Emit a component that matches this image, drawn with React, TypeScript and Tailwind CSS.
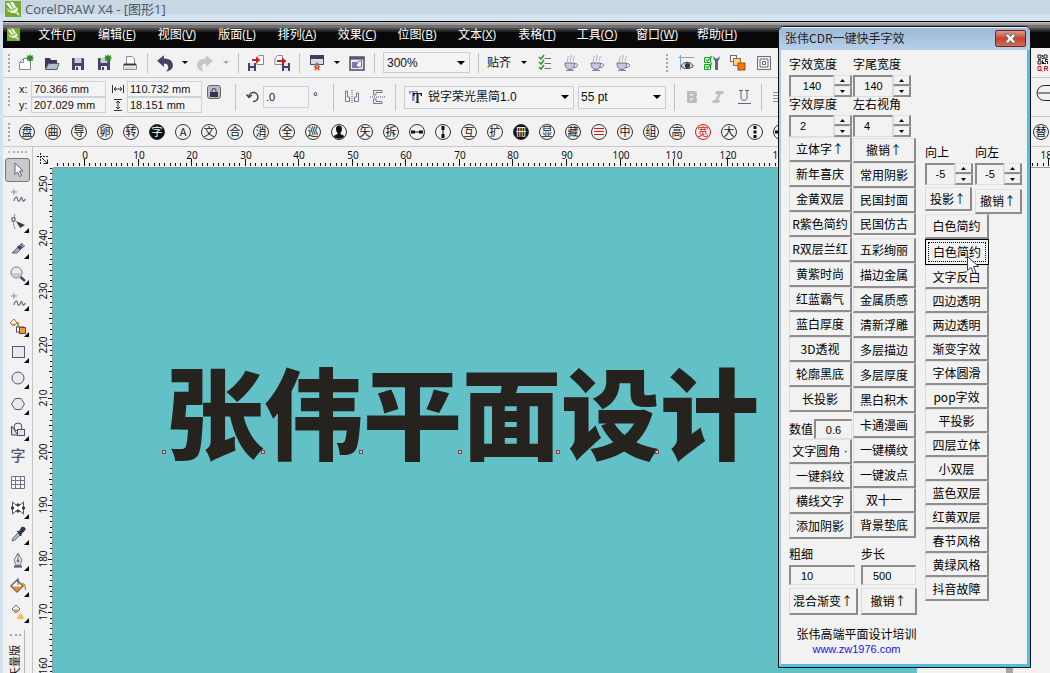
import React from "react";

const UI = "font-['Liberation_Sans','Noto_Sans_CJK_SC',sans-serif]";
const CJK = "font-['Noto_Sans_CJK_SC',sans-serif]";

type Kids = { children?: React.ReactNode };

function Svg({ children, s = 16 }: Kids & { s?: number }) {
  return (
    <svg width={s} height={s} viewBox="0 0 16 16" fill="none" stroke="#4a4d63" strokeWidth="1" aria-hidden="true" className="shrink-0 overflow-visible">
      {children}
    </svg>
  );
}

/* ---------- standard toolbar drawings ---------- */
const page = <path d="M5.5 3.5 H12.5 V14.5 H1.5 V7.5 Z M5.5 3.5 V7.5 H1.5" fill="#fff" stroke="#8487a0" />;
const floppy = (
  <>
    <path d="M2 3 H13 L14 4 V15 H2 Z" fill="#414564" stroke="none" />
    <path d="M4.5 3 H11.5 V8 H4.5 Z" fill="#c9cbdc" stroke="none" />
    <path d="M5 11 H11 V15 H5 Z" fill="#e8e8f0" stroke="none" />
    <path d="M6 12 H8 V15 H6 Z" fill="#414564" stroke="none" />
  </>
);
const spark = <path d="M12 -1 L13 1 L15 0 L14.5 2 L16 3 L14.5 4 L15 6 L13 5.5 L12 7 L11 5.5 L9 6 L9.5 4 L8 3 L9.5 2 L9 0 L11 1 Z" fill="#2f8d27" stroke="none" />;
const NewIcon = () => <Svg>{page}{spark}</Svg>;
const OpenIcon = () => (
  <Svg>
    <path d="M1 14 V3 H6 L7 5 H13 V8 H5 Z" fill="#363a55" stroke="none" />
    <path d="M1.5 14.5 L4.5 8.5 H15 L13 14.5 Z" fill="#b9bdd0" stroke="#555a76" />
  </Svg>
);
const SaveIcon = () => <Svg>{floppy}</Svg>;
const SaveAsIcon = () => <Svg>{floppy}{spark}</Svg>;
const PrintIcon = () => (
  <Svg>
    <path d="M4.5 9 V1.5 H10 L12.5 4 V9" fill="#fff" stroke="#8487a0" />
    <path d="M1.5 9.5 H14.5 V14.5 H1.5 Z" fill="#eeeef2" stroke="#8b8ea4" />
    <path d="M2 9.500 H14" stroke="#34384f" strokeWidth="2" />
    <path d="M3 13 H13" stroke="#d6d25a" />
  </Svg>
);
const UndoIcon = ({ off = false }: { off?: boolean }) => (
  <Svg s={18}>
    <g transform={off ? "translate(16 0) scale(-1 1)" : undefined}>
      <path d="M1 6 L7 1 V4 C13 4 15 7 15 10 C15 13 13 15 9 15.5 C12 13 11.500 8.500 7 8.500 V11.500 Z" fill={off ? "#c6c6c6" : "#42455f"} stroke="none" />
    </g>
  </Svg>
);
const ImportIcon = () => (
  <Svg>
    <path d="M9 2.500 L11 .5 H15.500 V9.500 H9 Z" fill="#fff" stroke="#8487a0" />
    <path d="M0 8 H8 V16 H0 Z" fill="#414564" stroke="none" />
    <path d="M2 8 H6 V11 H2 Z M2 13 H6 V16 H2 Z" fill="#dfe0ea" stroke="none" />
    <path d="M4 4 H8 V1.500 L12.500 5 L8 8.500 V6 H4 Z" fill="#c81e1e" stroke="none" />
  </Svg>
);
const ExportIcon = () => (
  <Svg>
    <path d="M1 3.500 L3.500 .5 H8.500 V9.500 H1 Z" fill="#fff" stroke="#8487a0" />
    <path d="M8 8 H16 V16 H8 Z" fill="#414564" stroke="none" />
    <path d="M10 8 H14 V11 H10 Z M10 13 H14 V16 H10 Z" fill="#dfe0ea" stroke="none" />
    <path d="M3 5 H8 V2.500 L12.500 6 L8 9.500 V7 H3 Z" fill="#c81e1e" stroke="none" />
  </Svg>
);
const LaunchIcon = () => (
  <Svg>
    <rect x="1.500" y=".5" width="13" height="9" fill="#d9dae4" />
    <path d="M1 2 H15" strokeWidth="4" stroke="#3c4058" />
    <path d="M6 9 L8 7 L10 9 V11 H6 Z" fill="#7a7d92" stroke="none" />
    <path d="M4.500 11 H11.500 L10 13 L10.500 16 L8 14 L5.500 16 L6 13 Z" fill="#e9451b" stroke="none" />
    <path d="M7 11 H9 L8 13.500 Z" fill="#f6c234" stroke="none" />
  </Svg>
);
const WelcomeIcon = () => (
  <Svg>
    <rect x="1" y="2" width="14" height="13" fill="#e9e9f2" strokeWidth="1.500" />
    <path d="M1 3.500 H15" strokeWidth="2" />
    <path d="M3 7 H10 V13 H3 Z" fill="#767bb0" stroke="none" />
    <path d="M7 12 C8 8 9 6 12.500 5.500 V12 Z" fill="#fff" stroke="#6468a0" />
  </Svg>
);
const ListIcon = () => (
  <Svg>
    {[3, 8, 13].map((y) => (
      <g key={y}>
        <path d={`M2 ${y - 1} L4 ${y + 1} L7 ${y - 3}`} stroke="#2f9a2c" strokeWidth="1.500" />
        <path d={`M7.500 ${y + 0.5} H14`} stroke="#666a94" />
      </g>
    ))}
  </Svg>
);
const CupIcon = () => (
  <Svg>
    <path d="M2 8 H11.500 C11.500 12 10 14.500 7 14.500 C4 14.500 2 12 2 8 Z" fill="#c3c9e2" stroke="#686c88" />
    <path d="M11.500 9 C16 7.500 15.500 13 10.500 12.500" stroke="#686c88" />
    <path d="M3 15.500 H11" stroke="#8286a0" />
    <path d="M5 7 C3 4 6 4 5 1 M8 6 C6 4 9 3 8 0 M11 6 C9 4 12 3 11 1" stroke="#a9aab4" />
  </Svg>
);
const EyeIcon = () => (
  <Svg>
    <path d="M2.500 0 V15 M0 2.500 H16" stroke="#7da7cc" />
    <path d="M3 11 C6 6 12 6 15.500 11 C12 14.500 6 14.500 3 11 Z" fill="#ddd" stroke="#3b3d48" />
    <circle cx="9.500" cy="10.500" r="2.600" fill="#33353f" stroke="none" />
  </Svg>
);
const CheckToolIcon = () => (
  <Svg>
    <path d="M.5 2.500 H6.500 V7.500 H.5 Z M.5 9.500 H6.500 V14.500 H.5 Z" fill="#fff" stroke="#18a522" />
    <path d="M1.500 4.500 L3.500 6 L8 1 M1.500 11.500 L3.500 13 L8 8" stroke="#12c41f" strokeWidth="1.500" />
    <path d="M9.500 1 V4 L11 6 V15 H14 V6 L15.500 4 V1 L13.500 3.500 H11.500 Z" fill="#62667c" stroke="none" />
  </Svg>
);
const BoxesIcon = () => (
  <Svg>
    <rect x=".5" y=".5" width="6" height="6" fill="#fff" stroke="#666a80" />
    <rect x="3.500" y="3.500" width="7" height="7" fill="#ffd37c" stroke="#8b7245" />
    <rect x="8" y="8" width="7" height="7" fill="#f7770b" stroke="#a44f0c" />
  </Svg>
);
const RingsIcon = () => (
  <Svg>
    <path d="M1.500 1.500 H14.500 V14.500 H1.500 Z M4 4 H12 V12 H4 Z M6.500 6.500 H9.500 V9.500 H6.500 Z" stroke="#6b6d84" />
  </Svg>
);
const QrIcon = () => (
  <svg width="12" height="18" viewBox="0 0 12 18" aria-hidden="true">
    <path d="M1 1h3v3h-3zM7 1h3v3h-3zM1 7h3v3h-3z" fill="none" stroke="#222" />
    <path d="M5 1h1v2h-1zM5 4h2v1h-2zM8 5h3v1h-3zM5 6h1v2h1v1h2v1h-4zM8 6h1v1h2v3h-1v-2h-2zM1 5h3v1h-3z" fill="#222" />
    <path d="M1 12.500h3v4h-3zM3 15.500l2 2M7.500 17v-4.500h3v2h-3M9 14.500l2 2.500" fill="none" stroke="#e01515" />
  </svg>
);

/* ---------- toolbox drawings ---------- */
const squiggle = (
  <>
    <path d="M4 1 V7 M1 4 H7" stroke="#8c8fa4" />
    <path d="M4 13 C5 8 7 8 7.500 11 S9 14 10.500 11 S12 10 12.500 12 S14 13 15.500 11" stroke="#6d7086" strokeWidth="1.300" />
  </>
);
const tools: { name: string; fly?: boolean; art: React.ReactNode }[] = [
  { name: "挑选", art: <path d="M5 1 L13 9 H9.500 L11.500 13.500 L9.500 14.500 L7.500 10 L5 12.500 Z" fill="#fff" stroke="#5d6076" /> },
  { name: "手绘", art: squiggle },
  { name: "形状", fly: true, art: <><path d="M5 0 C3 5 3 11 5 15" stroke="#7f8298" /><rect x="2" y="4" width="3" height="3" fill="#fff" /><path d="M6 7 L15 11 L10 14 Z" fill="#373a4e" stroke="none" /></> },
  { name: "裁剪", fly: true, art: <><path d="M2 13 L8 7 L10 10 L7 13 Z" fill="#a7aab8" stroke="#62657a" /><path d="M7 7 L12 3 L15 6 L10 10 Z" fill="#40435a" stroke="none" /><path d="M10 5 L13 7 M12 4 L14 6" stroke="#ccc" /></> },
  { name: "缩放", fly: true, art: <><circle cx="6.500" cy="6.500" r="5.500" fill="#ececf0" stroke="#71748a" /><path d="M2 7 H11 A4.500 4.500 0 0 1 2 7" fill="#cbcbd3" stroke="none" /><path d="M10.500 11 L15 15" stroke="#45485e" strokeWidth="2.500" /></> },
  { name: "曲线", fly: true, art: squiggle },
  { name: "智能填充", fly: true, art: <><path d="M0 5 L4 1 L7 5 L4 8 Z" fill="#fff" stroke="#71748a" /><path d="M1 5.500 H7 L4 8 Z" fill="#ef8a18" stroke="none" /><path d="M8 4 V9" stroke="#ef8a18" strokeWidth="2" /><rect x="6.500" y="9" width="7" height="5" fill="#fff" /><rect x="9.500" y="9.500" width="6" height="6" fill="#f39a33" /></> },
  { name: "矩形", fly: true, art: <rect x="2.500" y="2.500" width="12" height="11" fill="#e9e9ed" stroke="#55586e" /> },
  { name: "椭圆", fly: true, art: <circle cx="8" cy="8" r="6" fill="#e9e9ed" stroke="#55586e" /> },
  { name: "多边形", fly: true, art: <path d="M5 2.500 H11 L14.500 8 L11 13.500 H5 L1.500 8 Z" fill="#e9e9ed" stroke="#55586e" /> },
  { name: "基本形状", fly: true, art: <><path d="M1.500 4 V13 H8 Z" fill="#ddd" /><circle cx="8" cy="5" r="4" fill="#eee" /><rect x="7.500" y="7.500" width="7" height="6" fill="#e4e4ea" /></> },
  { name: "文本", art: <text x="8" y="13" textAnchor="middle" fontSize="15" fontWeight="500" fill="#55586e" stroke="none" fontFamily="Noto Sans CJK SC">字</text> },
  { name: "表格", art: <path d="M1.500 2.500 H14.500 V14.500 H1.500 Z M1.500 6.500 H14.500 M1.500 10.500 H14.500 M5.500 2.500 V14.500 M10.500 2.500 V14.500" stroke="#71748a" fill="#f8f8fb" /> },
  { name: "调和", fly: true, art: <><path d="M2.500 2 L6 5 H10 L13.500 2 V14 L10 11 H6 L2.500 14 Z" fill="#fff" /><path d="M1.500 7h2v2h-2zM12.500 7h2v2h-2zM7 4h2v2h-2zM7 10h2v2h-2z" fill="#34374b" stroke="#34374b" /></> },
  { name: "滴管", fly: true, art: <><path d="M2 15 L3 12 L8 7 L10 9 L5 14 Z" fill="#a8c2c4" stroke="#5f6f7a" /><path d="M7 5 L9 6 L12 1 L15 2 L15 4 L11 8 L11 10 Z" fill="#34374b" stroke="#34374b" /></> },
  { name: "轮廓", fly: true, art: <><path d="M8 1 L12 8 L10 13 H6 L4 8 Z M8 2 V8" fill="#e9e9ed" stroke="#71748a" /><path d="M4 14.500 H12" strokeWidth="2" /><circle cx="8" cy="9" r="1" /></> },
  { name: "填充", fly: true, art: <><path d="M1 8 L7 2 L13 8 L7 14 Z" fill="#fff" stroke="#62657b" strokeWidth="1.500" /><path d="M2 8.500 H12 L7 13.500 Z" fill="#f08c12" stroke="none" /><path d="M8 0 V7" /><path d="M12 5.500 C15 5.500 15.500 8 15.500 12" stroke="#f08c12" strokeWidth="1.500" /></> },
  { name: "交互式填充", fly: true, art: <><path d="M2 5 L6 1 L10 5 L6 9 Z" fill="#fff" stroke="#62657b" /><path d="M3 5.500 H9 L6 8 Z" fill="#e5891f" stroke="none" /><path d="M9 10 H12 L14 15 H7 Z" fill="#f5bd52" stroke="none" /></> },
];

/* ---------- small layout parts ---------- */
const Grip = () => <span className="mx-[5px] h-[18px] w-0 shrink-0 border-l-2 border-dotted border-[#a5a5a5]" />;
const Sep = ({ tall = false }: { tall?: boolean }) => (
  <span className={`mx-[4px] w-px shrink-0 bg-[#c3c3c3] ${tall ? "h-[27px]" : "h-[20px]"}`} />
);
const Caret = ({ off = false }: { off?: boolean }) => (
  <svg width="6" height="3" viewBox="0 0 6 3" aria-hidden="true" className="shrink-0"><path d="M0 0 H6 L3 3 Z" fill={off ? "#a8a8a8" : "#000"} /></svg>
);
function Cell({ label, children }: Kids & { label: string }) {
  return <button aria-label={label} className="flex h-[26px] w-[26px] shrink-0 items-center justify-center">{children}</button>;
}
function Drop({ label, value, className, pad = "pl-[4px]", icon }: { label: string; value: string; className: string; pad?: string; icon?: React.ReactNode }) {
  return (
    <span className={`relative flex shrink-0 items-center border border-[#c4ced9] bg-[#f4f4f4] ${className}`}>
      {icon}
      <select aria-label={label} className={`h-full w-full appearance-none bg-transparent ${pad} leading-[16px] outline-none`}>
        <option>{value}</option>
      </select>
      <svg width="8" height="4" viewBox="0 0 8 4" aria-hidden="true" className="pointer-events-none absolute right-[4px]"><path d="M0 0 H8 L4 4 Z" fill="#000" /></svg>
    </span>
  );
}

const plugins = "盘,曲,导,卵,转,*字,A,文,合,消,全,巡,@user,矢,拆,@h,@v,互,扩,*冊,显,藏,@red,中,组,高,!宽,大,@seg,@h".split(",");

function Plugin({ code }: { code: string }) {
  const inv = code[0] === "*";
  const red = code[0] === "!";
  const glyph = inv || red ? code.slice(1) : code;
  const drawn = code[0] === "@";
  return (
    <button aria-label={drawn ? "插件" : glyph} className="flex h-[26px] w-[26px] shrink-0 items-center justify-center">
      <svg width="18" height="18" viewBox="0 0 18 18" aria-hidden="true">
        <circle cx="9" cy="9" r="7.500" fill={inv ? "#111" : "none"} stroke={red ? "#d21d1d" : "#333"} />
        {!drawn && (
          <text x="9" y="13" textAnchor="middle" fontSize="11" fontFamily="Noto Sans CJK SC" fill={inv ? "#fff" : red ? "#d21d1d" : "#111"}>{glyph}</text>
        )}
        {code === "@user" && <path d="M9 2.500 C13 2.500 12.500 8 10.500 10 V11 L14.500 13 C12 16.500 6 16.500 3.500 13 L7.500 11 V10 C5.500 8 5 2.500 9 2.500 Z" fill="#111" />}
        {code === "@h" && <path d="M3 7.500 H7 V8.500 H11 V7.500 H15 V10.500 H11 V9.500 H7 V10.500 H3 Z" fill="#111" />}
        {code === "@v" && <path d="M7.500 3 H10.500 V7 H9.500 V11 H10.500 V15 H7.500 V11 H8.500 V7 H7.500 Z" fill="#111" />}
        {code === "@seg" && <path d="M7.500 3h3v3h-3zM7.500 7.500h3v3h-3zM7.500 12h3v3h-3z" fill="#111" />}
        {code === "@red" && <path d="M4 5.500 H14 M4 8.500 H14 M4 11.500 H14" stroke="#d21d1d" />}
      </svg>
    </button>
  );
}

/* ---------- rulers ---------- */
const STEP = 5.355;
const range = (n: number, from = 0) => Array.from({ length: n }, (_, i) => i + from);
const topLabels = [...range(14), 18];

function TopRuler() {
  return (
    <svg height="21" className="block w-full" aria-hidden="true">
      {range(190, -5).map((i) => {
        const x = Math.round(32 + i * STEP) - 0.5;
        return <path key={i} d={`M${x} ${i % 10 === 0 ? 12 : 16} V19`} stroke="#111" />;
      })}
      {topLabels.map((i) => (
        <text key={i} x={Math.round(32 + i * STEP * 10)} y="12" textAnchor="middle" fontSize="10" fontFamily="Noto Sans" fill="#111">{i * 10}</text>
      ))}
      <path d="M0 20.500 H3000" stroke="#9a9a9a" />
    </svg>
  );
}
function SideRuler() {
  return (
    <svg width="20" className="block h-full shrink-0" aria-hidden="true">
      {range(120, -3).map((i) => {
        const y = Math.round(17 + i * STEP) - 0.5;
        return <path key={i} d={`M${i % 10 === 0 ? 15 : i % 5 === 0 ? 16 : 17} ${y} H19`} stroke="#111" />;
      })}
      {range(10).map((i) => {
        const y = Math.round(16 + i * STEP * 10);
        return <text key={i} x="14" y={y} transform={`rotate(-90 14 ${y})`} textAnchor="middle" fontSize="10" fontFamily="Noto Sans" fill="#111">{250 - i * 10}</text>;
      })}
      <path d="M19.500 0 V3000" stroke="#8f9fa0" />
    </svg>
  );
}

/* ---------- effects dialog ---------- */
const raised = "border-t border-l border-r-2 border-b-2 border-t-[#e2e2e2] border-l-[#dcdcdc] border-r-[#8a8a8a] border-b-[#8e8e8e] bg-[#f2f2f2]";
const sunken = "border-t-2 border-l-2 border-r border-b border-t-[#8c8c8c] border-l-[#8c8c8c] border-r-[#dedede] border-b-[#dedede] bg-[#f2f2f2] outline-none";

function Btn({ children, className = "h-[25px] w-full" }: Kids & { className?: string }) {
  return <button className={`flex shrink-0 items-center justify-center overflow-hidden whitespace-nowrap leading-[16px] ${raised} ${className}`}>{children}</button>;
}
function Spin({ label, value, field, align = "text-center" }: { label: string; value: string; field: string; align?: string }) {
  return (
    <span className="flex h-[22px] items-stretch">
      <input aria-label={label} defaultValue={value} className={`${sunken} ${field} ${align} ${UI} text-[11px]`} />
      <span className="flex w-[18px] flex-col">
        <button aria-label={`${label} 增加`} className={`flex h-[11px] items-center justify-center ${raised}`}><svg width="5" height="3" viewBox="0 0 5 3"><path d="M0 3 L2.500 0 L5 3 Z" /></svg></button>
        <button aria-label={`${label} 减少`} className={`flex h-[11px] items-center justify-center ${raised}`}><svg width="5" height="3" viewBox="0 0 5 3"><path d="M0 0 L2.500 3 L5 0 Z" /></svg></button>
      </span>
    </span>
  );
}

const colA = ["立体字↑", "新年喜庆", "金黄双层", "R紫色简约", "R双层兰红", "黄紫时尚", "红蓝霸气", "蓝白厚度", "3D透视", "轮廓黑底", "长投影"];
const colA2 = ["一键斜纹", "横线文字", "添加阴影"];
const colB = ["撤销↑", "常用阴影", "民国封面"];
const colB2 = ["五彩绚丽", "描边金属", "金属质感", "清新浮雕", "多层描边", "多层厚度", "黑白积木", "卡通漫画", "一键横纹", "一键波点", "双十一", "背景垫底"];
const colC = ["文字反白", "四边透明", "两边透明"];
const colC2 = ["渐变字效", "字体圆滑", "pop字效", "平投影", "四层立体", "小双层", "蓝色双层", "红黄双层", "春节风格", "黄绿风格", "抖音故障"];

function EffectsDialog() {
  return (
    <section className={`absolute top-[26px] left-[778px] flex h-[642px] w-[253px] flex-col overflow-hidden rounded-t-[6px] border border-[#111] bg-[#f2f2f2] text-[12px] text-black ${CJK}`}>
      <header className="flex h-[23px] shrink-0 items-start justify-between border-t border-[#e8f3fc] bg-linear-to-b from-[#9db8d5] to-[#b7d0ea] pr-[4px] pl-[6px]">
        <h2 className="pt-px leading-[18px] text-[#222]">张伟CDR一键快手字效</h2>
        <button aria-label="关闭" className="mt-[2px] flex h-[17px] w-[31px] items-center justify-center rounded-[2px] border border-[#6b2a24] bg-linear-to-b from-[#dc9a8c] via-[#c5452f] to-[#cf6b53]">
          <svg width="13" height="11" viewBox="0 0 13 11"><path d="M1 1 H4.500 L6.500 3.500 L8.500 1 H12 L9 5.500 L12 10 H8.500 L6.500 7.500 L4.500 10 H1 L4 5.500 Z" fill="#fff" stroke="#666a76" /></svg>
        </button>
      </header>
      <div className="flex flex-1 flex-col border-r-[3px] border-b-[3px] border-l-[2px] border-r-[#4fc0dc] border-b-[#4fc0dc] border-l-[#b0cbe8] pl-[8px]">
        <div className="flex gap-[9px]">
          <div className="w-[127px]">
            <div className="grid grid-cols-[64px_63px] pt-[5px]">
              <span className="h-[20px] leading-[18px]">字效宽度</span>
              <span className="h-[20px] leading-[18px]">字尾宽度</span>
              <Spin label="字效宽度" value="140" field="w-[45px]" />
              <Spin label="字尾宽度" value="140" field="w-[40px]" />
              <span className="h-[18px] leading-[14px]">字效厚度</span>
              <span className="h-[18px] leading-[14px]">左右视角</span>
              <Spin label="字效厚度" value="2" field="w-[45px]" align="pl-[9px]" />
              <Spin label="左右视角" value="4" field="w-[40px]" align="pl-[9px]" />
            </div>
            <div className="grid grid-cols-[63px_63px] gap-x-px">
              <div>
                {colA.map((t) => <Btn key={t}>{t}</Btn>)}
                <label className="flex h-[27px] items-end">
                  <span className="w-[25px] leading-[20px] whitespace-nowrap">数值</span>
                  <input defaultValue="0.6" className={`h-[20px] w-[38px] text-center text-[11px] ${UI} ${sunken}`} />
                </label>
                <Btn>文字圆角<span className={UI}>&nbsp;·</span></Btn>
                {colA2.map((t) => <Btn key={t}>{t}</Btn>)}
              </div>
              <div className="pt-px">
                {colB.map((t) => <Btn key={t}>{t}</Btn>)}
                <Btn className="mb-[3px] h-[22px] w-full">民国仿古</Btn>
                {colB2.map((t) => <Btn key={t}>{t}</Btn>)}
              </div>
            </div>
            <div className="grid grid-cols-[72px_55px] pt-[6px]">
              <label>
                <span className="block h-[20px] leading-[18px]">粗细</span>
                <input defaultValue="10" className={`h-[20px] w-[66px] pl-[10px] text-[11px] ${UI} ${sunken}`} />
              </label>
              <label>
                <span className="block h-[20px] leading-[18px]">步长</span>
                <input defaultValue="500" className={`h-[20px] w-[55px] pl-[10px] text-[11px] ${UI} ${sunken}`} />
              </label>
              <Btn className="mt-[3px] h-[27px] w-[69px]">混合渐变↑</Btn>
              <Btn className="mt-[3px] h-[27px] w-[56px]">撤销↑</Btn>
            </div>
          </div>
          <div className="pt-[93px]">
            <div className="grid grid-cols-[50px_47px]">
              <span className="h-[20px] leading-[18px]">向上</span>
              <span className="h-[20px] leading-[18px]">向左</span>
              <Spin label="向上" value="-5" field="w-[30px]" />
              <Spin label="向左" value="-5" field="w-[29px]" />
              <Btn className="mt-[2px] h-[24px] w-[47px]">投影↑</Btn>
              <Btn className="mt-[4px] h-[25px] w-[47px]">撤销↑</Btn>
            </div>
            <div className="w-[64px]">
              <Btn>白色简约</Btn>
              <button className="flex h-[26px] w-full items-center justify-center border border-black bg-[#f2f2f2] p-[2px] leading-[16px]">
                <span className="flex h-[20px] w-full items-center justify-center border border-dotted border-black">白色简约</span>
              </button>
              {colC.map((t) => <Btn key={t} className="h-[24px] w-full">{t}</Btn>)}
              {colC2.map((t) => <Btn key={t} className="h-[24px] w-full">{t}</Btn>)}
            </div>
          </div>
        </div>
        <footer className="flex w-[135px] flex-col items-center pt-[10px] whitespace-nowrap">
          <span className="leading-[18px]">张伟高端平面设计培训</span>
          <a href="#site" className={`text-[11px] leading-[13px] text-[#1414f0] ${UI}`}>www.zw1976.com</a>
        </footer>
      </div>
      <svg width="13" height="19" viewBox="0 0 13 19" aria-hidden="true" className="absolute top-[229px] left-[188px]">
        <path d="M.5 .5 V14.500 L4 11.500 L6.500 17.500 L9 16.500 L6.500 10.500 H11.500 Z" fill="#fff" stroke="#3b3e58" />
      </svg>
    </section>
  );
}

const menus = [["文件", "F"], ["编辑", "E"], ["视图", "V"], ["版面", "L"], ["排列", "A"], ["效果", "C"], ["位图", "B"], ["文本", "X"], ["表格", "T"], ["工具", "O"], ["窗口", "W"], ["帮助", "H"]];

function CorelLogo({ s }: { s: number }) {
  return (
    <svg width={s} height={s} viewBox="0 0 16 16" aria-hidden="true" className="shrink-0">
      <path d="M0 0 H16 V16 H0 Z" fill="#74ad2f" />
      <path d="M1 2 L4 2 L8 8 L6 9 Z" fill="#f5fbe8" />
      <path d="M5 1 L8 1 L11 6 L9 8 Z" fill="#f5fbe8" />
      <path d="M2 7 L5 10 L10 8.500 L12 6 L13 9 L11 12 L7 12 L3 10 Z" fill="#f5fbe8" />
      <path d="M11 12.500 L13 11 L14.500 15 Z" fill="#fff" />
    </svg>
  );
}

const field = "border border-[#cbd3dc] bg-[#f4f4f4] pl-[2px] text-[11px] outline-none";

export default function App() {
  return (
    <div className={`relative flex h-screen w-full flex-col overflow-hidden bg-[#f2f2f2] text-[12px] text-[#111] ${UI}`}>
      <header className="flex h-[21px] shrink-0 items-center gap-[4px] bg-[linear-gradient(to_bottom,#c9d6e3_0_14px,#d5e2ef_14px)] pb-[3px] pl-[5px]">
        <CorelLogo s={16} />
        <h1 className="text-[13px] leading-[18px] text-[#4c5866] font-['Open_Sans','Noto_Sans_CJK_SC',sans-serif]">CorelDRAW X4 - [图形1]</h1>
      </header>

      <div className="flex min-h-0 flex-1 flex-col border-l-[3px] border-[#d5e2ef]">
        <nav className="flex h-[27px] shrink-0 items-center bg-[linear-gradient(to_bottom,#000_0_1px,#c4c4c4_1px_2px,#9c9c9c_2px_4px,#707070_4px_7px,#484848_7px_9px,#242424_9px_11px,#080808_11px)] pl-[4px] text-white">
          <span className="w-[20px]"><CorelLogo s={13} /></span>
          {menus.map(([t, k]) => (
            <button key={k} className="w-[60px] shrink-0 text-center leading-[18px] font-['Open_Sans','Noto_Sans_CJK_SC',sans-serif]">{t}(<u>{k}</u>)</button>
          ))}
        </nav>

        <div className="flex h-[30px] shrink-0 items-center border-b border-[#c8c8c8]">
          <span className="-mr-[2px] flex"><Grip /></span>
          <Cell label="新建"><NewIcon /></Cell>
          <Cell label="打开"><OpenIcon /></Cell>
          <Cell label="保存"><SaveIcon /></Cell>
          <Cell label="另存为"><SaveAsIcon /></Cell>
          <Cell label="打印"><PrintIcon /></Cell>
          <Sep />
          <Cell label="撤销"><UndoIcon /></Cell>
          <span className="flex w-[14px] justify-center"><Caret /></span>
          <Cell label="重做"><UndoIcon off /></Cell>
          <span className="flex w-[16px] justify-center"><Caret off /></span>
          <Sep />
          <Cell label="导入"><ImportIcon /></Cell>
          <Cell label="导出"><ExportIcon /></Cell>
          <Sep />
          <Cell label="应用程序启动器"><LaunchIcon /></Cell>
          <span className="flex w-[14px] justify-center"><Caret /></span>
          <Cell label="欢迎屏幕"><WelcomeIcon /></Cell>
          <Sep />
          <Drop label="缩放级别" value="300%" className="ml-[4px] h-[21px] w-[87px]" pad="pl-[3px]" />
          <span className="w-[4px]" />
          <Sep />
          <button className="ml-[4px] flex items-center gap-[10px] leading-[18px]">贴齐<Caret /></button>
          <span className="w-[5px]" />
          <Cell label="选项"><ListIcon /></Cell>
          <Cell label="咖啡一"><CupIcon /></Cell>
          <Cell label="咖啡二"><CupIcon /></Cell>
          <Cell label="咖啡三"><CupIcon /></Cell>
          <span className="w-[25px]" />
          <Grip />
          <Cell label="预览"><EyeIcon /></Cell>
          <Cell label="检查"><CheckToolIcon /></Cell>
          <Cell label="顺序"><BoxesIcon /></Cell>
          <Cell label="轮廓图"><RingsIcon /></Cell>
          <span className="mr-px ml-auto shrink-0"><QrIcon /></span>
        </div>

        <div className="flex h-[39px] shrink-0 items-center border-b border-[#c8c8c8]">
          <Grip />
          <div className="ml-[4px] grid grid-cols-[12px_75px] text-[11px] leading-[16px]">
            <label htmlFor="px">x:</label><input id="px" defaultValue="70.366 mm" className={`h-[16px] ${field}`} />
            <label htmlFor="py">y:</label><input id="py" defaultValue="207.029 mm" className={`h-[16px] ${field}`} />
          </div>
          <div className="ml-[5px] grid grid-cols-[16px_75px] items-center">
            <svg width="14" height="10" viewBox="0 0 14 10" fill="none" stroke="#333" aria-hidden="true"><path d="M1.500 1 V9 M12.500 1 V9 M3 5 H11 M5 3 L3 5 L5 7 M9 3 L11 5 L9 7" /></svg>
            <input aria-label="宽度" defaultValue="110.732 mm" className={`h-[16px] ${field}`} />
            <svg width="14" height="12" viewBox="0 0 14 12" fill="none" stroke="#333" aria-hidden="true"><path d="M3 .5 H11 M3 11.500 H11 M7 2 V10 M5 4 L7 2 L9 4 M5 8 L7 10 L9 8" /></svg>
            <input aria-label="高度" defaultValue="18.151 mm" className={`h-[16px] ${field}`} />
          </div>
          <button aria-label="锁定比率" className="mb-[10px] ml-[5px] flex h-[14px] w-[14px] items-center justify-center rounded-[3px] border border-[#666] bg-[#bcbcc2]">
            <svg width="8" height="9" viewBox="0 0 8 9"><path d="M2 4 V2.500 A2 2 0 0 1 6 2.500 V4" fill="none" stroke="#333650" /><rect x="0" y="4" width="8" height="5" fill="#333650" /></svg>
          </button>
          <span className="w-[10px]" />
          <Sep tall />
          <svg width="14" height="14" viewBox="0 0 14 14" fill="none" stroke="#3c3f55" strokeWidth="1.500" aria-hidden="true" className="ml-[6px]"><path d="M3 6 A4.500 4.500 0 1 1 7 11.500 M.5 4.500 L3 7.500 L6 5" /></svg>
          <input aria-label="旋转角度" defaultValue=".0" className={`ml-[3px] h-[22px] w-[46px] ${field}`} />
          <span className="ml-[4px] w-[6px] leading-[16px]">°</span>
          <span className="w-[10px]" />
          <Sep tall />
          <span className="ml-px flex">
            <Cell label="水平镜像"><Svg><path d="M1.500 2 V12.500 H5.500 V8 H3.500 V2 Z M14.500 4 V12.500 H10.500 V8 H12.500 V4 Z" stroke="#73768c" /><path d="M8 1 V15" strokeDasharray="1 1" /></Svg></Cell>
            <Cell label="垂直镜像"><Svg><path d="M3.500 6 V1.500 H12 V3.500 H6 V6 Z M3.500 10 V14.500 H12 V12.500 H6 V10 Z" stroke="#73768c" /><path d="M0 8 H16" strokeDasharray="1 1" /></Svg></Cell>
          </span>
          <Sep tall />
          <Drop label="字体" value="锐字荣光黑简1.0" className="ml-[4px] h-[23px] w-[170px]" pad="pl-px" icon={
            <svg width="18" height="14" viewBox="0 0 18 14" aria-hidden="true" className="ml-[4px] shrink-0"><path d="M0 1 H9 V4 H8 L7 2 H5.500 V11 H3 V2 H2 L1 4 H0 Z" fill="#8688c0" /><path d="M4 3 H13 V6 H12 L11 4 H9.500 V12 L11 13 H6 L7.500 12 V4 H6 L5 6 H4 Z" fill="#222" /></svg>
          } />
          <Drop label="字号" value="55 pt" className="ml-[4px] h-[23px] w-[88px]" pad="pl-[2px]" />
          <span className="w-[4px]" />
          <Sep tall />
          <Cell label="粗体"><Svg><path d="M3 2 H11 L13 4 V7 L12 8 L13 9 V13 L12 14 H3 Z M6 5 V6.500 H9 V5 Z M6 9.500 V11 H9 V9.500 Z" fill="#bdbdbd" fillRule="evenodd" stroke="none" /></Svg></Cell>
          <Cell label="斜体"><Svg><path d="M6 2 H14 L13 5 H11 L8 11 H10 L9 14 H2 L3 11 H5 L8 5 H5 Z" fill="#c0c0c0" stroke="none" /></Svg></Cell>
          <Cell label="下划线"><Svg><path d="M3 1.500 H7 M9 1.500 H13 M5 2 V9 C5 12 11 12 11 9 V2 M2 14.500 H15" stroke="#62657b" /></Svg></Cell>
          <Sep tall />
          <Cell label="对齐"><Svg><path d="M2 3.500 H15 M2 6.500 H15 M2 9.500 H15 M2 12.500 H15" stroke="#8a8da0" /></Svg></Cell>
          <svg width="14" height="18" viewBox="0 0 14 18" fill="none" stroke="#222" aria-hidden="true" className="mb-[8px] ml-auto shrink-0"><path d="M14 1.500 H8.500 A7.500 7.500 0 0 0 8.500 16.500 H14 M2 9 H14" /></svg>
        </div>

        <div className="flex h-[30px] shrink-0 items-center border-b border-[#c8c8c8]">
          <span className="-mr-px flex"><Grip /></span>
          {plugins.map((c, i) => <Plugin key={i} code={c} />)}
          <span className="-mr-[4px] ml-auto"><Plugin code="替" /></span>
        </div>

        <main className="flex min-h-0 flex-1">
          <aside className="flex w-[30px] shrink-0 flex-col overflow-hidden border-r border-[#c3c3c3] pl-[2px]">
            <span className="mt-[4px] mb-[5px] ml-[3px] h-0 w-[19px] shrink-0 border-t-2 border-dotted border-[#b0b0b0]" />
            {tools.map((t, i) => (
              <button key={t.name} aria-label={t.name} className={`relative mb-[2px] flex h-[24px] w-[25px] shrink-0 items-center justify-center ${i === 0 ? "rounded-[3px] border border-[#777] bg-[#c9c9c9]" : ""}`}>
                <Svg>{t.art}</Svg>
                {t.fly && <svg width="5" height="5" viewBox="0 0 5 5" aria-hidden="true" className="absolute right-px bottom-px"><path d="M5 0 V5 H0 Z" fill="#000" /></svg>}
              </button>
            ))}
            <div className="mt-[4px] w-[20px] shrink-0 border-r border-[#b5b5b5] pt-[4px]">
              <span className="mb-[9px] ml-[5px] block h-0 w-[11px] border-t-2 border-dotted border-[#a5a5a5]" />
              <span className={`ml-px flex rotate-180 text-[11px] leading-[16px] [text-orientation:sideways] [writing-mode:vertical-rl] ${CJK}`}>矢量版</span>
            </div>
          </aside>
          <div className="flex min-w-0 flex-1 flex-col">
            <div className="flex h-[21px] shrink-0">
              <span className="flex w-[20px] shrink-0 items-end justify-center pb-[3px]">
                <svg width="12" height="12" viewBox="0 0 12 12" fill="none" stroke="#222" aria-hidden="true"><path d="M0 3.500 H12 M3.500 0 V12" strokeDasharray="2 1" /><path d="M5 5 L10.500 10.500 M10.500 6.500 V10.500 H6.500" /></svg>
              </span>
              <TopRuler />
            </div>
            <div className="flex min-h-0 flex-1">
              <SideRuler />
              <div className="relative min-w-0 flex-1 overflow-hidden bg-[#62c0c7]">
                <p className={`absolute top-[183px] left-[112px] text-[99px] leading-[116px] font-black whitespace-nowrap text-[#26221d] ${CJK}`}>张伟平面设计</p>
                <div className="absolute top-[282px] left-[109px] flex w-[497px] justify-between">
                  {range(6).map((i) => <span key={i} className="h-[4px] w-[4px] border border-[#a03a3e] bg-[#9fd0d4]" />)}
                </div>
              </div>
              <div className="w-[133px] shrink-0 pl-[89px]">
                <div className="h-full w-[7px] bg-[#a6a6a6]" />
              </div>
            </div>
          </div>
        </main>
      </div>
      <EffectsDialog />
    </div>
  );
}
